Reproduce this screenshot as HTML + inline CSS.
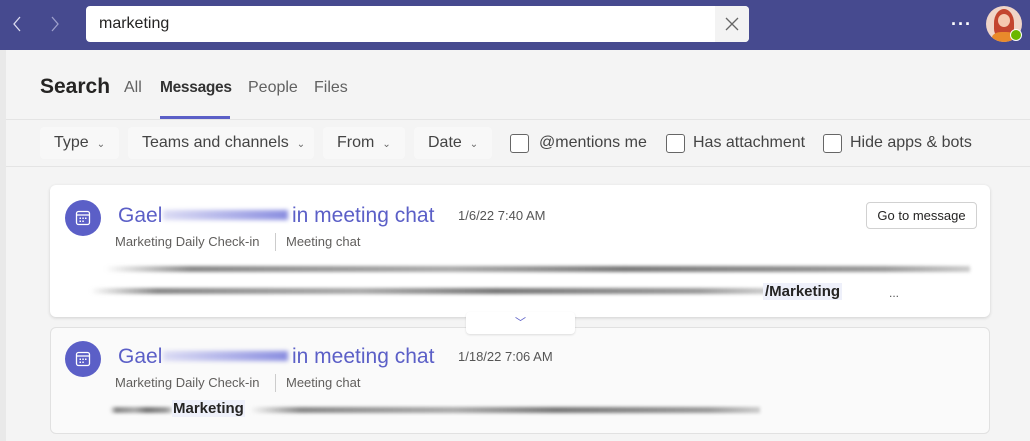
<!DOCTYPE html>
<html><head><style>
*{margin:0;padding:0;box-sizing:border-box}
body{width:1030px;height:441px;overflow:hidden;background:#f4f4f4;font-family:"Liberation Sans",sans-serif;position:relative;color:#252423}
.abs{position:absolute}
.top{left:0;top:0;width:1030px;height:50px;background:#464a8f}
.search{left:86px;top:6px;width:663px;height:36px;background:#fff;border-radius:4px}
.search span{position:absolute;left:13px;top:9px;font-size:16px;color:#252423}
.xbtn{left:715px;top:6px;width:34px;height:36px;background:#f3f3f3;border-radius:0 4px 4px 0}
.chip{top:127px;height:32px;background:#f8f8f8;border-radius:4px;font-size:16px;color:#444;line-height:32px;padding-left:14px}
.chip i{font-style:normal;font-size:10px;margin-left:8px;color:#666}
.cb{top:134px;width:19px;height:19px;border:1.5px solid #666;border-radius:3px;background:#fff}
.lbl{top:134px;font-size:16px;color:#444}
.card{left:50px;width:940px;border-radius:6px}
.av{width:36px;height:36px;border-radius:50%;background:#5b5fc7}
.ttl{font-size:21px;color:#5b5fc7}
.dt{font-size:13px;color:#555}
.sub{font-size:13px;color:#605e5c}
.blur{filter:blur(1.5px);height:6px;background:linear-gradient(90deg,#fff0,#888 10%,#aaa 40%,#777 60%,#999 90%,#ccc)}
</style></head><body>
<div class="abs" style="left:0;top:50px;width:6px;height:391px;background:#e9e9e9"></div>
<div class="abs top"></div>
<svg class="abs" style="left:10px;top:15px" width="50" height="18"><path d="M10 2 L4 9 L10 16" stroke="#dcdcf0" stroke-width="1.3" fill="none"/><path d="M45 2 L51 9 L45 16" transform="translate(-3,0)" stroke="#9ea0cc" stroke-width="1.3" fill="none"/></svg>
<div class="abs search"><span>marketing</span></div>
<div class="abs xbtn"><svg width="34" height="36"><path d="M11 12 L23 24 M23 12 L11 24" stroke="#666" stroke-width="1.3"/></svg></div>
<div class="abs" style="left:951px;top:14px;color:#fff;font-size:18px;letter-spacing:1px;font-weight:bold">···</div>
<div class="abs" style="left:986px;top:6px;width:36px;height:36px;border-radius:50%;background:#f0d5c8;overflow:hidden"><div style="position:absolute;left:8px;top:3px;width:20px;height:28px;border-radius:50% 50% 30% 30%;background:#c3452f"></div><div style="position:absolute;left:12px;top:8px;width:12px;height:13px;border-radius:50%;background:#f5c9b0"></div><div style="position:absolute;left:6px;top:26px;width:24px;height:14px;border-radius:40%;background:#e98a2b"></div></div>
<div class="abs" style="left:1010px;top:29px;width:12px;height:12px;border-radius:50%;background:#6bb700;border:1.5px solid #fff"></div>
<div class="abs" style="left:40px;top:75px;font-size:21px;font-weight:bold">Search</div>
<div class="abs" style="left:124px;top:79px;font-size:16px;color:#616161">All</div>
<div class="abs" style="left:160px;top:79px;font-size:15.5px;color:#333;font-weight:bold;letter-spacing:-0.3px">Messages</div>
<div class="abs" style="left:160px;top:116px;width:70px;height:3px;background:#5b5fc7"></div>
<div class="abs" style="left:248px;top:79px;font-size:16px;color:#616161">People</div>
<div class="abs" style="left:314px;top:79px;font-size:16px;color:#616161">Files</div>
<div class="abs" style="left:6px;top:119px;width:1024px;height:1px;background:#e4e4e4"></div>
<div class="abs" style="left:6px;top:166px;width:1024px;height:1px;background:#e4e4e4"></div>
<div class="abs chip" style="left:40px;width:79px">Type<i>⌄</i></div>
<div class="abs chip" style="left:128px;width:186px">Teams and channels<i>⌄</i></div>
<div class="abs chip" style="left:323px;width:82px">From<i>⌄</i></div>
<div class="abs chip" style="left:414px;width:78px">Date<i>⌄</i></div>
<div class="abs cb" style="left:510px"></div><div class="abs lbl" style="left:539px">@mentions me</div>
<div class="abs cb" style="left:666px"></div><div class="abs lbl" style="left:693px">Has attachment</div>
<div class="abs cb" style="left:823px"></div><div class="abs lbl" style="left:850px">Hide apps &amp; bots</div>

<div class="abs card" style="top:185px;height:132px;background:#fff;box-shadow:0 1px 3px rgba(0,0,0,.15)"></div>
<div class="abs av" style="left:65px;top:200px"></div>
<svg class="abs" style="left:75px;top:210px" width="16" height="16"><rect x="1.5" y="1.5" width="13" height="13" rx="2" fill="none" stroke="#fff" stroke-width="1.3"/><line x1="2" y1="5" x2="14" y2="5" stroke="#fff" stroke-width="1.3"/><g fill="#fff"><rect x="4.5" y="7.5" width="1.5" height="1.5"/><rect x="7.3" y="7.5" width="1.5" height="1.5"/><rect x="10" y="7.5" width="1.5" height="1.5"/><rect x="4.5" y="10.5" width="1.5" height="1.5"/><rect x="7.3" y="10.5" width="1.5" height="1.5"/></g></svg>
<div class="abs ttl" style="left:118px;top:204px">Gael</div>
<div class="abs" style="left:163px;top:210px;width:125px;height:10px;background:linear-gradient(90deg,#dcdcf4,#8a8ee0);filter:blur(2px)"></div>
<div class="abs ttl" style="left:292px;top:204px">in meeting chat</div>
<div class="abs dt" style="left:458px;top:208px">1/6/22 7:40 AM</div>
<div class="abs sub" style="left:115px;top:234px">Marketing Daily Check-in</div>
<div class="abs" style="left:275px;top:233px;width:1px;height:18px;background:#ccc"></div>
<div class="abs sub" style="left:286px;top:234px">Meeting chat</div>
<div class="abs" style="left:866px;top:202px;width:111px;height:27px;border:1px solid #d1d1d1;border-radius:4px;font-size:13px;text-align:center;line-height:25px">Go to message</div>
<div class="abs blur" style="left:105px;top:266px;width:865px"></div>
<div class="abs blur" style="left:90px;top:288px;width:676px"></div>
<div class="abs" style="left:763px;top:283px;font-size:15px;font-weight:bold;background:#eef0fa;padding:0 2px">/Marketing</div>
<div class="abs" style="left:889px;top:286px;font-size:12px;color:#555">...</div>

<div class="abs card" style="top:327px;height:107px;background:#fafafa;border:1px solid #e1e1e1"></div>
<div class="abs" style="left:466px;top:312px;width:109px;height:22px;background:#fff;border-radius:4px;box-shadow:0 1px 2px rgba(0,0,0,.12);text-align:center;color:#5b5fc7;font-size:11px;line-height:22px">﹀</div>
<div class="abs av" style="left:65px;top:341px"></div>
<svg class="abs" style="left:75px;top:351px" width="16" height="16"><rect x="1.5" y="1.5" width="13" height="13" rx="2" fill="none" stroke="#fff" stroke-width="1.3"/><line x1="2" y1="5" x2="14" y2="5" stroke="#fff" stroke-width="1.3"/><g fill="#fff"><rect x="4.5" y="7.5" width="1.5" height="1.5"/><rect x="7.3" y="7.5" width="1.5" height="1.5"/><rect x="10" y="7.5" width="1.5" height="1.5"/><rect x="4.5" y="10.5" width="1.5" height="1.5"/><rect x="7.3" y="10.5" width="1.5" height="1.5"/></g></svg>
<div class="abs ttl" style="left:118px;top:345px">Gael</div>
<div class="abs" style="left:163px;top:351px;width:125px;height:10px;background:linear-gradient(90deg,#dcdcf4,#8a8ee0);filter:blur(2px)"></div>
<div class="abs ttl" style="left:292px;top:345px">in meeting chat</div>
<div class="abs dt" style="left:458px;top:349px">1/18/22 7:06 AM</div>
<div class="abs sub" style="left:115px;top:375px">Marketing Daily Check-in</div>
<div class="abs" style="left:275px;top:374px;width:1px;height:18px;background:#ccc"></div>
<div class="abs sub" style="left:286px;top:375px">Meeting chat</div>
<div class="abs blur" style="left:110px;top:407px;width:62px"></div>
<div class="abs" style="left:172px;top:400px;font-size:15px;font-weight:bold;background:#eef0fa;padding:0 1px">Marketing</div>
<div class="abs blur" style="left:250px;top:407px;width:510px"></div>
</body></html>
